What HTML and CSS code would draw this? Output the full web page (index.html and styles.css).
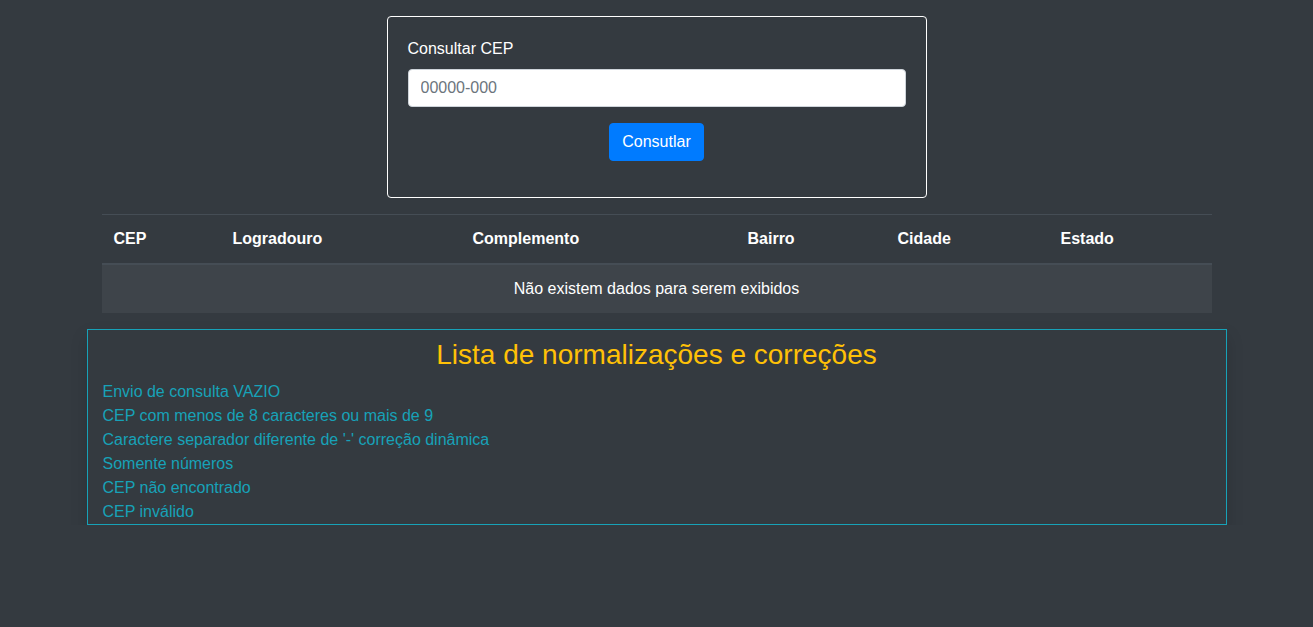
FILE: index.html
```html
<!DOCTYPE html>
<html lang="pt-BR">
<head>
<meta charset="utf-8">
<title>Consultar CEP</title>
<link rel="stylesheet" href="styles.css">
</head>
<body>
<div class="page">
  <form class="search-card">
    <div class="form-group">
      <label class="label" for="cep">Consultar CEP</label>
      <input class="input" id="cep" type="text" placeholder="00000-000">
    </div>
    <div class="actions">
      <button class="btn" type="button">Consutlar</button>
    </div>
  </form>

  <div class="table-wrap">
    <table class="table">
      <thead>
        <tr>
          <th class="c-cep">CEP</th>
          <th class="c-log">Logradouro</th>
          <th class="c-comp">Complemento</th>
          <th class="c-bairro">Bairro</th>
          <th class="c-cidade">Cidade</th>
          <th class="c-estado">Estado</th>
        </tr>
      </thead>
      <tbody>
        <tr class="empty-row">
          <td colspan="6">Não existem dados para serem exibidos</td>
        </tr>
      </tbody>
    </table>
  </div>

  <section class="rules">
    <h3 class="rules-title">Lista de normalizações e correções</h3>
    <ul class="rules-list">
      <li>Envio de consulta VAZIO</li>
      <li>CEP com menos de 8 caracteres ou mais de 9</li>
      <li>Caractere separador diferente de '-' correção dinâmica</li>
      <li>Somente números</li>
      <li>CEP não encontrado</li>
      <li>CEP inválido</li>
    </ul>
  </section>
</div>
</body>
</html>
```

FILE: styles.css
```css
* { box-sizing: border-box; }

html, body {
  margin: 0;
  padding: 0;
}

body {
  background: #343a40;
  color: #fff;
  font-family: "Liberation Sans", Arial, sans-serif;
  font-size: 16px;
  line-height: 24px;
}

.page {
  width: 1140px;
  margin: 0 auto;
  padding-top: 16px;
  display: flex;
  flex-direction: column;
  align-items: center;
}

.search-card {
  width: 540px;
  border: 1px solid #fff;
  border-radius: 4px;
  padding: 20px 20px 20px;
  margin: 0 0 16px;
}

.form-group {
  display: flex;
  flex-direction: column;
  margin-bottom: 16px;
}

.label {
  display: block;
  margin-bottom: 8px;
  color: #fff;
}

.input {
  height: 38px;
  width: 100%;
  padding: 6px 12px;
  border: 1px solid #ced4da;
  border-radius: 4px;
  background: #fff;
  font-family: inherit;
  font-size: 16px;
  line-height: 24px;
  color: #495057;
}

.input::placeholder { color: #6c757d; }

.actions {
  display: flex;
  justify-content: center;
  margin-bottom: 16px;
}

.btn {
  height: 38px;
  padding: 6px 12px;
  border: 1px solid #007bff;
  border-radius: 4px;
  background: #007bff;
  color: #fff;
  font-family: inherit;
  font-size: 16px;
  line-height: 24px;
}

.table-wrap {
  width: 1140px;
  padding: 0 15px;
  margin-bottom: 16px;
}

.table {
  width: 100%;
  border-collapse: collapse;
  color: #fff;
}

.table th,
.table td {
  padding: 12px;
  border-top: 1px solid #454d55;
  text-align: left;
  vertical-align: top;
}

.table thead th {
  border-bottom: 2px solid #454d55;
  font-weight: bold;
}

.c-cep { width: 119px; }
.c-log { width: 240px; }
.c-comp { width: 275px; }
.c-bairro { width: 150px; }
.c-cidade { width: 163px; }
.c-estado { width: 163px; }

.empty-row td {
  background: #3e444a;
  text-align: center;
  border-top: 0;
}

.rules {
  width: 1140px;
  border: 1px solid #17a2b8;
  padding: 0 15px;
  box-shadow: 0 8px 16px rgba(0, 0, 0, 0.15);
}

.rules-title {
  margin: 8px 0 8px;
  font-size: 28px;
  line-height: 33.6px;
  font-weight: 500;
  color: #ffc107;
  text-align: center;
}

.rules-list {
  list-style: none;
  margin: 0;
  padding: 0;
  color: #17a2b8;
}
```
